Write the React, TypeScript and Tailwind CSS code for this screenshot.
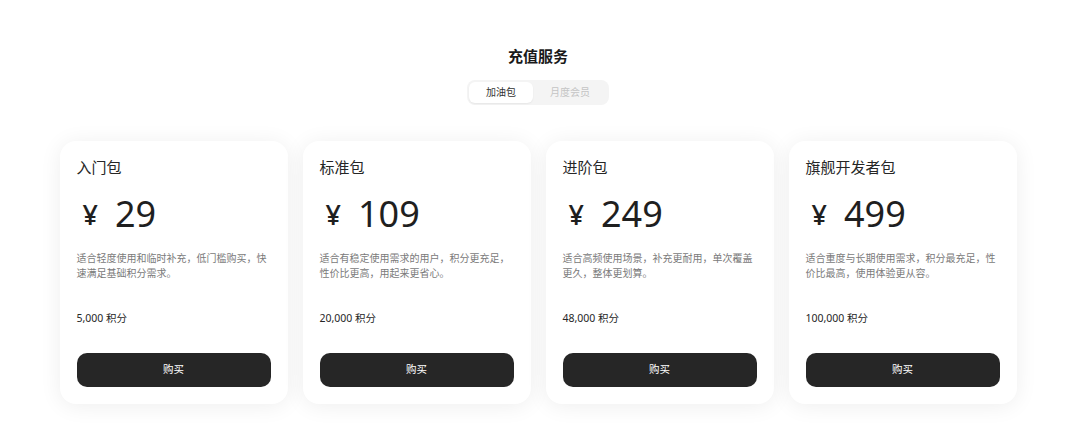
import { useState } from "react";

type Pack = {
	name: string;
	price: number;
	desc: string;
	credits: string;
};

const packs: Pack[] = [
	{
		name: "入门包",
		price: 29,
		desc: "适合轻度使用和临时补充，低门槛购买，快速满足基础积分需求。",
		credits: "5,000",
	},
	{
		name: "标准包",
		price: 109,
		desc: "适合有稳定使用需求的用户，积分更充足，性价比更高，用起来更省心。",
		credits: "20,000",
	},
	{
		name: "进阶包",
		price: 249,
		desc: "适合高频使用场景，补充更耐用，单次覆盖更久，整体更划算。",
		credits: "48,000",
	},
	{
		name: "旗舰开发者包",
		price: 499,
		desc: "适合重度与长期使用需求，积分最充足，性价比最高，使用体验更从容。",
		credits: "100,000",
	},
];

const font = "font-['Noto_Sans','Noto_Sans_CJK_SC',sans-serif]";

function PackCard({ pack }: { pack: Pack }) {
	return (
		<div className="flex w-[228px] flex-col rounded-2xl bg-white px-[17px] pb-[17px] pt-[14px] shadow-[0_2px_22px_rgba(0,0,0,0.07)]">
			<div className="text-[15px] leading-6 text-[#262626]">{pack.name}</div>
			<div className="mt-[15px] flex h-10 items-center gap-[17px] pl-[6px] text-[#1f1f1f]">
				<span className="text-[27px] font-medium leading-none">¥</span>
				<span className="text-[36px] leading-none">{pack.price}</span>
			</div>
			<p className="mt-[17px] h-[30px] text-[10px] leading-[15px] text-[#7a7a7a]">
				{pack.desc}
			</p>
			<div className="mt-[30px] text-[10.5px] leading-[15px] text-[#262626]">
				{pack.credits} 积分
			</div>
			<button
				type="button"
				className="mt-[27px] h-[34px] w-full rounded-[10px] bg-[#262626] text-[10.5px] text-white"
			>
				购买
			</button>
		</div>
	);
}

export default function App() {
	const [tab, setTab] = useState<"fuel" | "monthly">("fuel");

	return (
		<div className={`min-h-[431px] bg-white pr-[4px] pt-[45px] ${font}`}>
			<h1 className="text-center text-[15px] font-bold leading-[22px] text-[#1a1a1a]">
				充值服务
			</h1>
			<div className="mt-[13px] flex justify-center">
				<div className="flex h-[25px] w-[142px] items-center rounded-lg bg-[#f4f4f4] p-[2px]">
					<button
						type="button"
						onClick={() => setTab("fuel")}
						className={`h-[21px] w-[64px] rounded-md text-[10px] ${
							tab === "fuel"
								? "bg-white text-[#333] shadow-[0_1px_2px_rgba(0,0,0,0.06)]"
								: "text-[#bbb]"
						}`}
					>
						加油包
					</button>
					<button
						type="button"
						onClick={() => setTab("monthly")}
						className={`h-[21px] flex-1 rounded-md text-[10px] ${
							tab === "monthly"
								? "bg-white text-[#333] shadow-[0_1px_2px_rgba(0,0,0,0.06)]"
								: "text-[#c4c4c4]"
						}`}
					>
						月度会员
					</button>
				</div>
			</div>
			<div className="mt-[36px] flex justify-center gap-[15px]">
				{packs.map((p) => (
					<PackCard key={p.name} pack={p} />
				))}
			</div>
		</div>
	);
}
